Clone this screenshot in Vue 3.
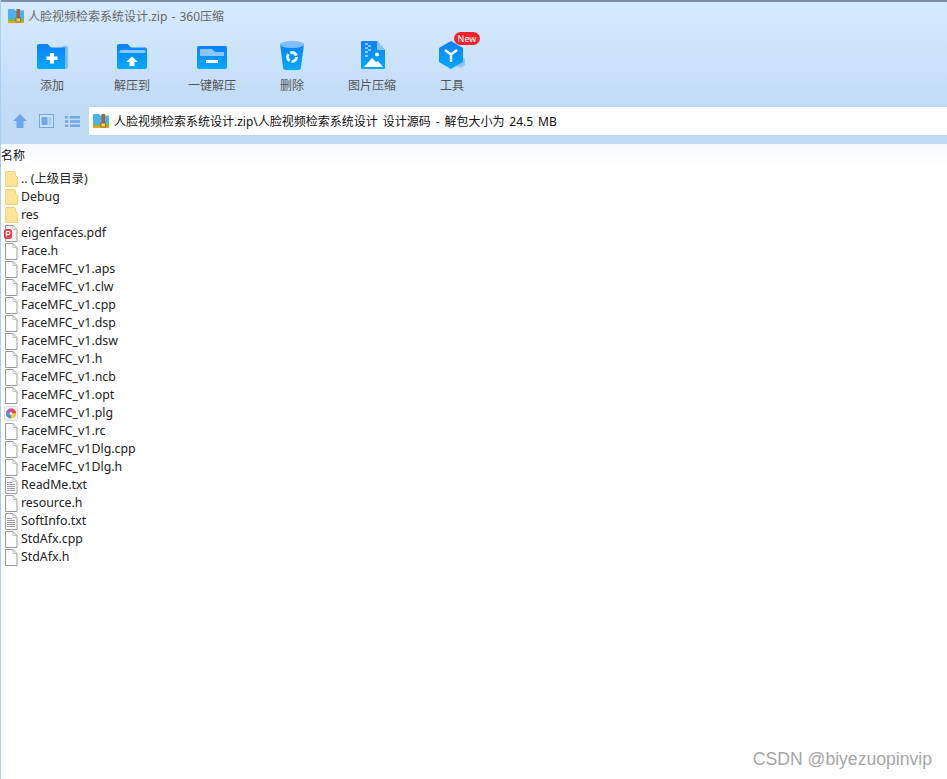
<template>
  <div class="window">
    <svg class="defs" width="0" height="0">
      <defs>
        <linearGradient id="blue" x1="0" y1="0" x2="0" y2="1">
          <stop offset="0" stop-color="#0a80ff" />
          <stop offset="1" stop-color="#00a9ff" />
        </linearGradient>
        <symbol id="zipicon" viewBox="0 0 16 16">
          <path d="M0 2a1 1 0 0 1 1-1h5l1.500 1.500H16V12H0z" fill="#4db0f2" />
          <rect y="11" width="16" height="2" fill="#6cc04a" />
          <rect y="13" width="16" height="2" fill="#f0a020" />
          <rect x="8.500" y="1" width="3.500" height="12" fill="#a8642c" />
          <rect x="8" y="10" width="4.500" height="4" fill="#f5d060" stroke="#8a5020" stroke-width=".7" />
        </symbol>
        <symbol id="page" viewBox="0 0 14 17">
          <path d="M1.500.5h7.500l4 4v12h-11.500z" fill="#fdfdfd" stroke="#9a9a9a" />
          <path d="M9 .5v4h4" fill="none" stroke="#c0c0c0" />
        </symbol>
        <symbol id="folder" viewBox="0 0 14 17">
          <path d="M2 .5h8.500l1 1v3l2 1.500v9.500H2a.5.5 0 0 1-.5-.5V1a.5.5 0 0 1 .5-.5z" fill="#ffe396" stroke="#f0d07c" />
        </symbol>
      </defs>
    </svg>

    <header class="top">
      <div class="title">
        <svg class="zip" width="16" height="16"><use href="#zipicon" /></svg>
        <span>人脸视频检索系统设计.zip - 360压缩</span>
      </div>

      <div class="toolbar">
        <div class="tool">
          <svg width="32" height="32" viewBox="0 0 32 32">
            <rect x="26" y="6" width="6" height="23" rx="2" fill="#7fbcff" />
            <path d="M1 6a2 2 0 0 1 2-2h8.500l3.500 3.500h14V29H3a2 2 0 0 1-2-2z" fill="url(#blue)" />
            <path d="M14 13h4v3.500h3.500v3.500H18v3.500h-4V20h-3.500v-3.500H14z" fill="#fff" />
          </svg>
          <span>添加</span>
        </div>
        <div class="tool">
          <svg width="32" height="32" viewBox="0 0 32 32">
            <path d="M1 6a2 2 0 0 1 2-2h8.500l3.500 3.500h14a2 2 0 0 1 2 2V27a2 2 0 0 1-2 2H3a2 2 0 0 1-2-2z" fill="url(#blue)" />
            <path d="M3.500 12a2 2 0 0 1 2-2h23a1 1 0 0 1 1 1v2H3.500z" fill="#8cc6ff" />
            <path d="M16 16.500l6 5.500h-3.500v4h-5v-4H10z" fill="#fff" />
          </svg>
          <span>解压到</span>
        </div>
        <div class="tool">
          <svg width="32" height="32" viewBox="0 0 32 32">
            <rect x="1" y="6" width="30" height="23" rx="2" fill="url(#blue)" />
            <path d="M4 9h12l3 3h9v4H4z" fill="#8cc6ff" />
            <rect x="10" y="20" width="12" height="3" fill="#fff" />
          </svg>
          <span>一键解压</span>
        </div>
        <div class="tool">
          <svg width="32" height="32" viewBox="0 0 32 32">
            <path d="M4 4l3 23a3 3 0 0 0 3 3h12a3 3 0 0 0 3-3l3-23z" fill="url(#blue)" />
            <ellipse cx="16" cy="4.500" rx="12" ry="3.500" fill="#7fbcff" />
            <circle cx="16" cy="17" r="4.500" fill="none" stroke="#e4f2ff" stroke-width="3" stroke-dasharray="7.400 2" />
          </svg>
          <span>删除</span>
        </div>
        <div class="tool">
          <svg width="32" height="32" viewBox="0 0 32 32">
            <path d="M5 2a1 1 0 0 1 1-1h15l8 9v18a1 1 0 0 1-1 1H6a1 1 0 0 1-1-1z" fill="url(#blue)" />
            <path d="M21 1l8 9h-8z" fill="#8cc6ff" />
            <path d="M9 3h3v2H9zM12 5h3v2h-3zM9 7h3v2H9zM12 9h3v2h-3zM9 11h3v2H9zM9 15h3v2H9z" fill="#8cc6ff" />
            <circle cx="21" cy="14.500" r="2" fill="#fff" />
            <path d="M8 27l8-9 4 4 2-1 5 6z" fill="#fff" />
          </svg>
          <span>图片压缩</span>
        </div>
        <div class="tool">
          <span class="badge">New</span>
          <svg width="32" height="32" viewBox="0 0 32 32">
            <path d="M24 16l5 3v6l-5 3-5-3v-6z" fill="#8cc6ff" />
            <path d="M15 1l12 7v14l-12 7-12-7V8z" fill="url(#blue)" />
            <path d="M9 10l6 4.500 6-4.500M15 14.500V22" fill="none" stroke="#fff" stroke-width="2.400" />
          </svg>
          <span>工具</span>
        </div>
      </div>

      <div class="navrow">
        <div class="navbtns">
          <svg width="16" height="14" viewBox="0 0 16 14"><path d="M8 0l7 7h-3.500v7h-7V7H1z" fill="#6ea6ec" /></svg>
          <svg width="15" height="14" viewBox="0 0 15 14">
            <rect x=".5" y=".5" width="14" height="13" fill="#cfe2f9" stroke="#6ea6ec" />
            <rect x="2.500" y="3" width="6" height="8" fill="#6ea6ec" />
            <rect x="9.500" y="3" width="3" height="8" fill="#a9caf3" />
          </svg>
          <svg width="15" height="11" viewBox="0 0 15 11">
            <path d="M0 0h3v2.500H0zM0 4.200h3v2.500H0zM0 8.500h3V11H0zM5 0h10v2.500H5zM5 4.200h10v2.500H5zM5 8.500h10V11H5z" fill="#6ea6ec" />
          </svg>
        </div>
        <div class="address">
          <svg class="zip" width="16" height="16"><use href="#zipicon" /></svg>
          <span>人脸视频检索系统设计.zip\人脸视频检索系统设计 设计源码 - 解包大小为 24.5 MB</span>
        </div>
      </div>
    </header>

    <main class="list">
      <div class="colhead">名称</div>
      <div class="row" v-for="f in files" :key="f.name">
        <span class="icon">
          <svg v-if="f.type === 'folder'" width="14" height="17"><use href="#folder" /></svg>
          <svg v-else-if="f.type === 'pdf'" width="14" height="17" viewBox="0 0 14 17">
            <use href="#page" width="14" height="17" />
            <rect x="0" y="4" width="8" height="10" rx="2" fill="#e8424a" />
            <path d="M2.500 11.500V6.500h2a1.500 1.500 0 0 1 0 3h-2" fill="none" stroke="#fff" stroke-width="1.200" />
          </svg>
          <svg v-else-if="f.type === 'plg'" width="14" height="17" viewBox="0 0 14 17">
            <rect x=".5" y="1.500" width="13" height="14" rx="1" fill="#f2f2f2" stroke="#d8d8d8" />
            <circle cx="7" cy="8.500" r="5" fill="#f4a623" />
            <path d="M7 8.500V3.500a5 5 0 0 1 5 5z" fill="#e8424a" />
            <path d="M7 8.500H2a5 5 0 0 1 5-5z" fill="#a35cd8" />
            <path d="M7 8.500H2a5 5 0 0 0 5 5z" fill="#3f8ee8" />
            <path d="M7 8.500v5a5 5 0 0 0 5-5z" fill="#f0d030" />
            <circle cx="7" cy="8.500" r="1.500" fill="#fff" />
          </svg>
          <svg v-else-if="f.type === 'txt'" width="14" height="17" viewBox="0 0 14 17">
            <use href="#page" width="14" height="17" />
            <path d="M3 5.500h5M3 7.500h8M3 9.500h8M3 11.500h8M3 13.500h8" stroke="#9a9a9a" />
          </svg>
          <svg v-else width="14" height="17"><use href="#page" /></svg>
        </span>
        <span>{{ f.name }}</span>
      </div>
    </main>

    <div class="watermark">CSDN @biyezuopinvip</div>
  </div>
</template>

<script setup>
const files = [
  { name: ".. (上级目录)", type: "folder" },
  { name: "Debug", type: "folder" },
  { name: "res", type: "folder" },
  { name: "eigenfaces.pdf", type: "pdf" },
  { name: "Face.h" },
  { name: "FaceMFC_v1.aps" },
  { name: "FaceMFC_v1.clw" },
  { name: "FaceMFC_v1.cpp" },
  { name: "FaceMFC_v1.dsp" },
  { name: "FaceMFC_v1.dsw" },
  { name: "FaceMFC_v1.h" },
  { name: "FaceMFC_v1.ncb" },
  { name: "FaceMFC_v1.opt" },
  { name: "FaceMFC_v1.plg", type: "plg" },
  { name: "FaceMFC_v1.rc" },
  { name: "FaceMFC_v1Dlg.cpp" },
  { name: "FaceMFC_v1Dlg.h" },
  { name: "ReadMe.txt", type: "txt" },
  { name: "resource.h" },
  { name: "SoftInfo.txt", type: "txt" },
  { name: "StdAfx.cpp" },
  { name: "StdAfx.h" },
];
</script>

<style>
html,
body {
  margin: 0;
  background: #fff;
}
</style>

<style scoped>
.window {
  position: relative;
  height: 779px;
  overflow: hidden;
  background: #fff;
  border-left: 1px solid #a9cff5;
  box-sizing: border-box;
  font-family: "Noto Sans", "Noto Sans CJK SC", sans-serif;
  font-size: 12px;
}

.defs {
  position: absolute;
}

/* header */
.top {
  height: 144px;
  background: linear-gradient(#d6eaff 0, #d3e8fe 20px, #c1dbf5 106px, #c1dbf5 144px);
  border-top: 2px solid #7f8fa1;
  box-sizing: border-box;
}

.title {
  display: flex;
  align-items: center;
  gap: 4px;
  height: 30px;
  padding: 0 0 2px 7px;
  box-sizing: border-box;
  color: #666;
  word-spacing: 1px;
}

.zip {
  flex: none;
}

.toolbar {
  display: flex;
  height: 75px;
  padding-left: 11px;
}

.tool {
  position: relative;
  display: flex;
  flex-direction: column;
  align-items: center;
  width: 80px;
  padding-top: 8px;
  color: #555;
}

.tool span:last-child {
  margin-top: 4px;
}

.badge {
  position: absolute;
  top: 0;
  left: 42px;
  width: 26px;
  height: 13px;
  line-height: 13px;
  text-align: center;
  border-radius: 7px;
  background: #f5222d;
  color: #fff;
  font-size: 9px;
}

.navrow {
  display: flex;
  height: 28px;
}

.navbtns {
  display: flex;
  align-items: center;
  gap: 11px;
  width: 88px;
  padding-left: 11px;
  box-sizing: border-box;
}

.address {
  flex: 1;
  display: flex;
  align-items: center;
  gap: 5px;
  padding-left: 4px;
  background: #fff;
  box-shadow: 0 -1px 0 #b6d4f2, 0 1px 0 #b6d4f2;
  color: #111;
  word-spacing: 1.8px;
}

/* file list */
.list {
  background: linear-gradient(#f4f9fe, #fff 22px);
}

.colhead {
  height: 26px;
  line-height: 23px;
  color: #111;
}

.row {
  display: flex;
  align-items: center;
  height: 18px;
  line-height: 18px;
  padding-left: 3px;
  color: #222;
  font-size: 12.35px;
}

.icon {
  display: flex;
  width: 17px;
  flex: none;
}

.watermark {
  position: absolute;
  right: 15px;
  bottom: 9px;
  color: #a6a6a6;
  font-family: "Liberation Sans", sans-serif;
  font-size: 17.6px;
}
</style>
